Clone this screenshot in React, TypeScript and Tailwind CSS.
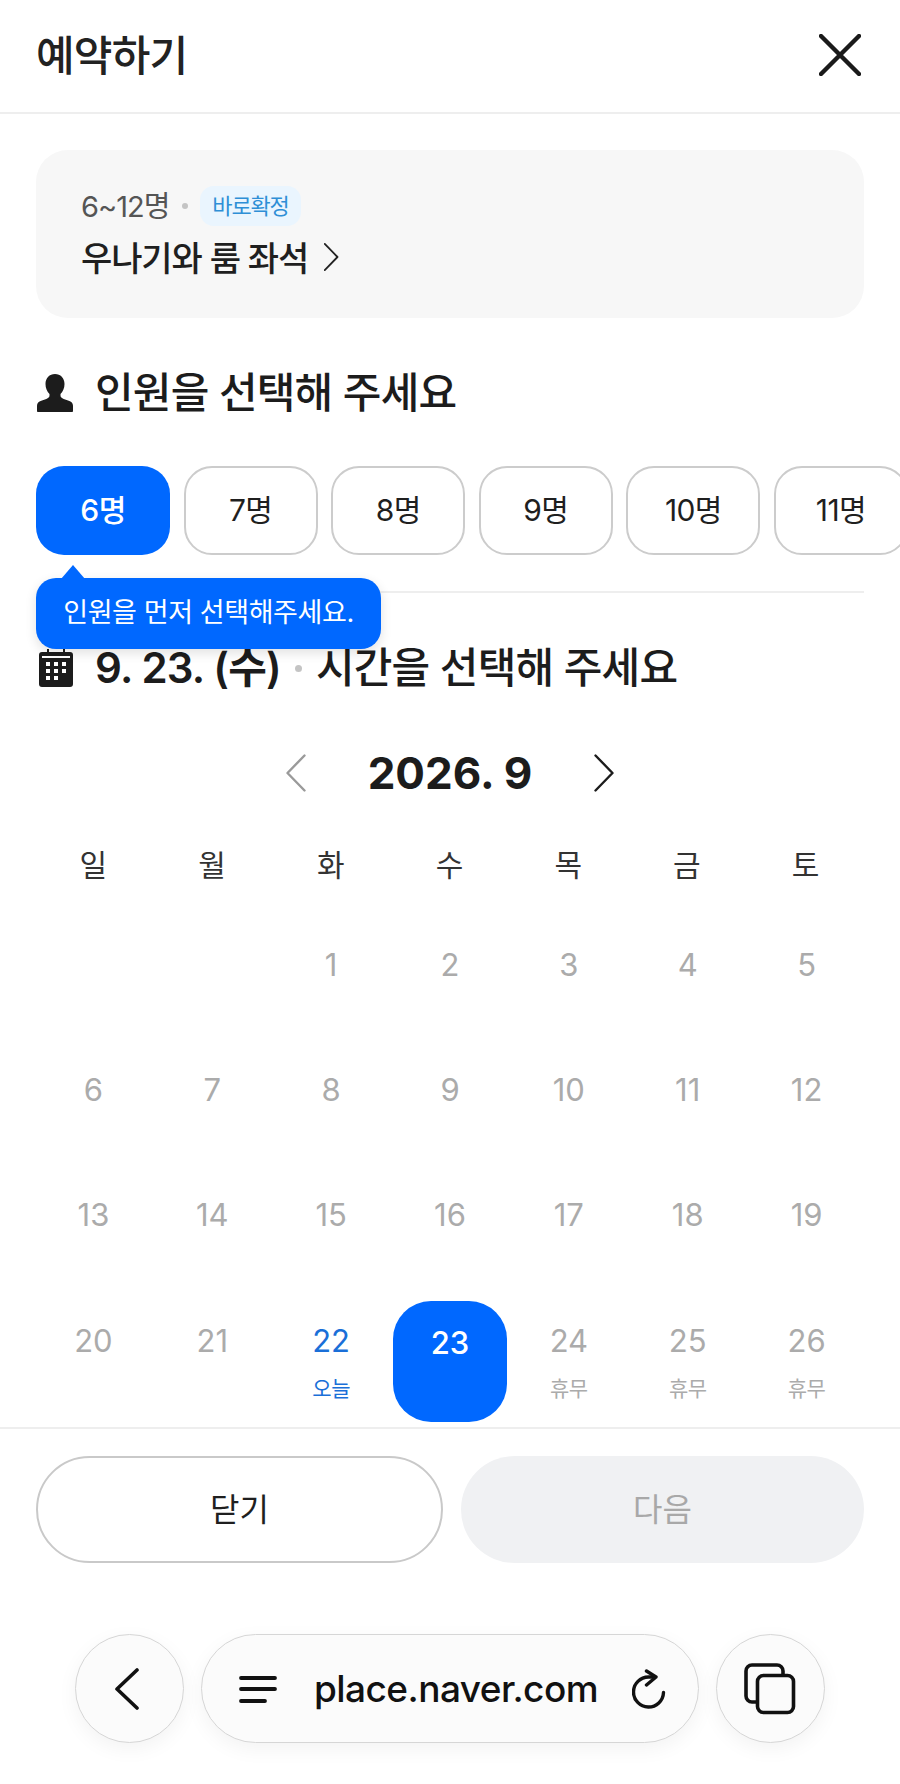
const chips = ["6명", "7명", "8명", "9명", "10명", "11명"];
const weekdays = ["일", "월", "화", "수", "목", "금", "토"];
const rows: (number | null)[][] = [
  [null, null, 1, 2, 3, 4, 5],
  [6, 7, 8, 9, 10, 11, 12],
  [13, 14, 15, 16, 17, 18, 19],
];

function Chevron({ dir, className }: { dir: "l" | "r"; className: string }) {
  return (
    <svg viewBox="0 0 20 38" className={className} fill="none" stroke="currentColor" strokeWidth="2.4" strokeLinecap="round" strokeLinejoin="round">
      {dir === "l" ? <path d="M19 1.5 2 19l17 17.5" /> : <path d="M1 1.5 18 19 1 36.5" />}
    </svg>
  );
}

function Heading({ icon, children }: { icon: React.ReactNode; children: React.ReactNode }) {
  return (
    <div className="flex items-center h-12 text-[42px] font-medium text-[#1c1c1c] tracking-[-0.8px] leading-none whitespace-nowrap">
      <div className="w-[59px] shrink-0">{icon}</div>
      {children}
    </div>
  );
}

export default function App() {
  return (
    <div className="relative w-[900px] h-[1784px] overflow-hidden bg-white font-['Inter','Noto_Sans_CJK_KR',sans-serif]">
      <header className="flex items-center justify-between h-[114px] border-b-2 border-[#eeeeee] pl-9 pr-[39px]">
        <h1 className="text-[42px] font-medium text-[#222222] leading-none tracking-[-0.8px]">예약하기</h1>
        <svg viewBox="0 0 42 42" className="w-[42px] h-[42px] text-[#1a1a1a] -mt-[2px]" fill="none" stroke="currentColor" strokeWidth="4.4" strokeLinecap="round">
          <path d="M2 2 40 40M40 2 2 40" />
        </svg>
      </header>

      <main className="px-9 pt-9">
        <section className="h-[168px] rounded-[32px] bg-[#f7f7f7] px-[45px] pt-[36px]">
          <div className="flex items-center h-10">
            <span className="text-[29px] text-[#555555] tracking-[-1px] leading-none">6~12명</span>
            <span className="w-[6px] h-[6px] rounded-full bg-[#c4c4c4] ml-[13px] mr-[12px]" />
            <span className="h-10 px-[12px] rounded-[14px] bg-[#eaf5fe] text-[#2f8fd6] text-[22px] leading-10 tracking-[-1.2px]">바로확정</span>
          </div>
          <div className="flex items-center mt-[16px] text-[34px] font-medium text-[#1f1f1f] leading-none tracking-[-1.1px]">
            우나기와 룸 좌석
            <Chevron dir="r" className="w-[15px] h-[30px] ml-[16px] -mt-[5px] text-[#222222]" />
          </div>
        </section>

        <div className="mt-[51px]">
          <Heading
            icon={
              <svg viewBox="0 0 36 38" className="w-9 h-[38px] ml-[1px] text-[#1c1c1c]" fill="currentColor">
                <path d="M18 0c5.500 0 9.500 4 9.500 10 0 4-1.500 7.500-4 10v1.500c0 1.800 1.300 2.700 3.200 3.400l5 1.900c2.600 1 4.300 2.300 4.300 5V37c0 .6-.5 1-1 1H1c-.5 0-1-.4-1-1v-5.200c0-2.700 1.700-4 4.300-5l5-1.900c1.900-.7 3.200-1.600 3.200-3.400V20c-2.500-2.500-4-6-4-10C8.500 4 12.500 0 18 0Z" />
              </svg>
            }
          >
            인원을 선택해 주세요
          </Heading>
        </div>

        <div className="relative mt-[49px]">
          <div className="flex gap-[13.6px] w-[900px]">
            {chips.map((c, i) => (
              <div
                key={c}
                className={
                  i === 0
                    ? "flex items-center justify-center shrink-0 w-[134px] h-[89px] rounded-[28px] bg-[#0068ff] text-white text-[30px] font-medium tracking-[-0.6px]"
                    : "flex items-center justify-center shrink-0 w-[134px] h-[89px] rounded-[28px] border-2 border-[#cccccc] bg-white text-[#1f1f1f] text-[30px] tracking-[-0.6px]"
                }
              >
                {c}
              </div>
            ))}
          </div>

          <div className="h-[2px] bg-[#eeeeee] mt-[36px]" />

          <div className="absolute left-0 top-[112px] w-[345px] h-[71px] rounded-[20px] bg-[#0068ff] shadow-[0_4px_12px_rgba(0,0,0,0.12)] flex items-center justify-center text-white text-[27px] tracking-[-0.4px] z-10">
            인원을 먼저 선택해주세요.
            <svg viewBox="0 0 24 14" className="absolute left-[25px] -top-[13px] w-6 h-[14px] text-[#0068ff]" fill="currentColor">
              <path d="M12 0 24 14H0Z" />
            </svg>
          </div>
        </div>

        <div className="mt-[51px]">
          <Heading
            icon={
              <svg viewBox="0 0 34 38" className="w-[34px] h-[38px] ml-[3px] text-[#1c1c1c]" fill="currentColor">
                <path fillRule="evenodd" d="M8 0h2v3h14V0h2v3h5a3 3 0 0 1 3 3v29a3 3 0 0 1-3 3H3a3 3 0 0 1-3-3V6a3 3 0 0 1 3-3h5ZM3 7v2h28V7Zm4 6v4h4v-4Zm8 0v4h4v-4Zm8 0v4h4v-4ZM7 20v4h4v-4Zm8 0v4h4v-4Zm8 0v4h4v-4ZM7 27v4h4v-4Zm8 0v4h4v-4Z" />
              </svg>
            }
          >
            <span className="font-semibold">9. 23. (수)</span>
            <span className="w-[7px] h-[7px] rounded-full bg-[#c4c4c4] mx-[14px]" />
            <span>시간을 선택해 주세요</span>
          </Heading>
        </div>

        <div className="flex items-center justify-center h-[60px] mt-[51px]">
          <Chevron dir="l" className="w-[21px] h-[38px] text-[#9a9a9a]" />
          <span className="w-[288px] text-center text-[44px] font-bold text-[#1c1c1c] leading-none">2026. 9</span>
          <Chevron dir="r" className="w-[21px] h-[38px] text-[#1c1c1c]" />
        </div>

        <div className="grid grid-cols-7 h-10 mt-[42px] -ml-[2px] -mr-[1px] items-center text-center text-[30px] text-[#333333] leading-none">
          {weekdays.map((d) => (
            <div key={d}>{d}</div>
          ))}
        </div>

        <div className="mt-[18px] -mx-[2px]">
          {rows.map((row, r) => (
            <div key={r} className="grid grid-cols-7 h-[125px] text-center text-[31px] text-[#ababab] leading-9 pt-[44px]">
              {row.map((d, i) => (
                <div key={i}>{d}</div>
              ))}
            </div>
          ))}
          <div className="grid grid-cols-7 h-[149px] text-center text-[31px] text-[#ababab] leading-9">
            <div className="pt-[45px]">20</div>
            <div className="pt-[45px]">21</div>
            <div className="pt-[45px] text-[#1a6fd8]">
              22
              <div className="text-[21px] leading-6 mt-[18px] tracking-[-0.5px]">오늘</div>
            </div>
            <div className="mt-[23px] mx-auto w-[114px] h-[121px] rounded-[38px] bg-[#0068ff] text-white font-medium pt-[24px]">23</div>
            {[24, 25, 26].map((d) => (
              <div key={d} className="pt-[45px]">
                {d}
                <div className="text-[21px] leading-6 mt-[18px] tracking-[-0.5px]">휴무</div>
              </div>
            ))}
          </div>
        </div>
      </main>

      <footer className="border-t-2 border-[#eeeeee] px-9 pt-[27px] flex gap-[18px]">
        <div className="flex items-center justify-center w-[407px] h-[107px] rounded-[54px] border-2 border-[#c9c9c9] text-[32px] text-[#1f1f1f]">닫기</div>
        <div className="flex items-center justify-center w-[403px] h-[107px] rounded-[54px] bg-[#f0f1f3] text-[32px] text-[#a8a8a8]">다음</div>
      </footer>

      <nav className="flex justify-center gap-[17px] mt-[71px]">
        <div className="flex items-center justify-center w-[109px] h-[109px] rounded-full border border-[#d6d6d6] bg-[#fbfbfb] shadow-[0_6px_20px_rgba(0,0,0,0.05)]">
          <svg viewBox="0 0 24 42" className="w-6 h-[42px] text-[#111111] -ml-[6px]" fill="none" stroke="currentColor" strokeWidth="3.6" strokeLinecap="round" strokeLinejoin="round">
            <path d="M22 2 2 21l20 19" />
          </svg>
        </div>
        <div className="flex items-center w-[498px] h-[109px] rounded-full border border-[#d6d6d6] bg-[#fbfbfb] shadow-[0_6px_20px_rgba(0,0,0,0.05)] pl-[37px]">
          <svg viewBox="0 0 38 28" className="w-[38px] h-7 text-[#111111]" fill="none" stroke="currentColor" strokeWidth="3.8" strokeLinecap="round">
            <path d="M2 3h34M2 14h34M2 26h24" />
          </svg>
          <span className="ml-[37px] text-[37px] font-medium text-[#111111] tracking-[-0.55px] leading-none">place.naver.com</span>
          <svg viewBox="0 0 34 40" className="w-[34px] h-10 ml-[34px] text-[#111111] shrink-0" fill="none" stroke="currentColor" strokeWidth="3.4" strokeLinecap="round" strokeLinejoin="round">
            <path d="M22 8H16.500A15 15 0 1 0 31.500 23.500" />
            <path d="M14.500 2 24 8l-9.500 8" />
          </svg>
        </div>
        <div className="flex items-center justify-center w-[109px] h-[109px] rounded-full border border-[#d6d6d6] bg-[#fbfbfb] shadow-[0_6px_20px_rgba(0,0,0,0.05)]">
          <svg viewBox="0 0 52 52" className="w-[52px] h-[52px] -ml-[2px] text-[#111111]" fill="none" stroke="currentColor" strokeWidth="3.6" strokeLinejoin="round" strokeLinecap="round">
            <path d="M39 12V8a6 6 0 0 0-6-6H8a6 6 0 0 0-6 6v25a6 6 0 0 0 6 6h4" />
            <rect x="13.500" y="12.500" width="36" height="37" rx="6" />
          </svg>
        </div>
      </nav>
    </div>
  );
}
